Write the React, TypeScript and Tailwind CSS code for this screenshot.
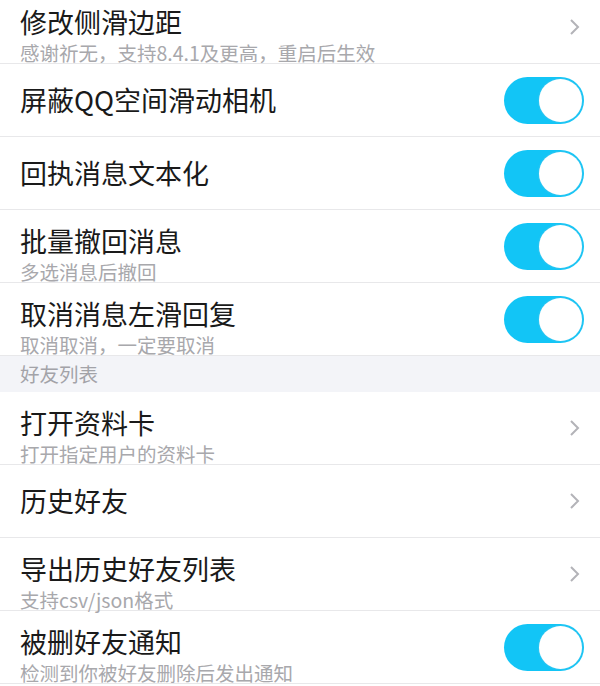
import React from 'react';

type Item =
  | { kind: 'row'; title: string; desc?: string; action: 'arrow' | 'toggle' }
  | { kind: 'header'; title: string };

const items: Item[] = [
  { kind: 'row', title: '修改侧滑边距', desc: '感谢祈无，支持8.4.1及更高，重启后生效', action: 'arrow' },
  { kind: 'row', title: '屏蔽QQ空间滑动相机', action: 'toggle' },
  { kind: 'row', title: '回执消息文本化', action: 'toggle' },
  { kind: 'row', title: '批量撤回消息', desc: '多选消息后撤回', action: 'toggle' },
  { kind: 'row', title: '取消消息左滑回复', desc: '取消取消，一定要取消', action: 'toggle' },
  { kind: 'header', title: '好友列表' },
  { kind: 'row', title: '打开资料卡', desc: '打开指定用户的资料卡', action: 'arrow' },
  { kind: 'row', title: '历史好友', action: 'arrow' },
  { kind: 'row', title: '导出历史好友列表', desc: '支持csv/json格式', action: 'arrow' },
  { kind: 'row', title: '被删好友通知', desc: '检测到你被好友删除后发出通知', action: 'toggle' },
];

function Toggle() {
  return (
    <div className="w-[80px] h-[47px] rounded-full bg-[#12c5f6] p-[2px] flex items-center">
      <div className="ml-auto w-[43px] h-[43px] rounded-full bg-white shadow-[0_0_2px_rgba(120,200,230,0.8)]" />
    </div>
  );
}

function Arrow() {
  return (
    <svg width="12" height="20" viewBox="0 0 12 20" className="mr-[3px]">
      <polyline points="2,3 9,10 2,17" fill="none" stroke="#b3b3b8" strokeWidth="2" />
    </svg>
  );
}

export default function App() {
  return (
    <div
      className="w-[600px] h-[686px] overflow-hidden bg-white"
      style={{ fontFamily: '"Noto Sans CJK SC", "Noto Sans", sans-serif' }}
    >
      <div className="-mt-[9px]">
        {items.map((item, i) =>
          item.kind === 'header' ? (
            <div key={i} className="h-[36px] bg-[#f3f4f8] flex items-center pl-[20px] text-[19.5px] leading-[26px] text-[#a3a3a8]">
              {item.title}
            </div>
          ) : (
            <div key={i} className="h-[73px] border-b border-[#e8e8ea] flex pl-[20px] pr-[16px]">
              <div className={`flex-1 flex flex-col ${item.desc ? 'pt-[14px]' : 'justify-center'}`}>
                <div className="text-[27px] leading-[34px] text-[#1a1a1a]">{item.title}</div>
                {item.desc && (
                  <div className="mt-[3px] text-[19.5px] leading-[21px] text-[#a8a8ac]">{item.desc}</div>
                )}
              </div>
              <div className="flex items-center">
                {item.action === 'toggle' ? <Toggle /> : <Arrow />}
              </div>
            </div>
          )
        )}
      </div>
    </div>
  );
}
